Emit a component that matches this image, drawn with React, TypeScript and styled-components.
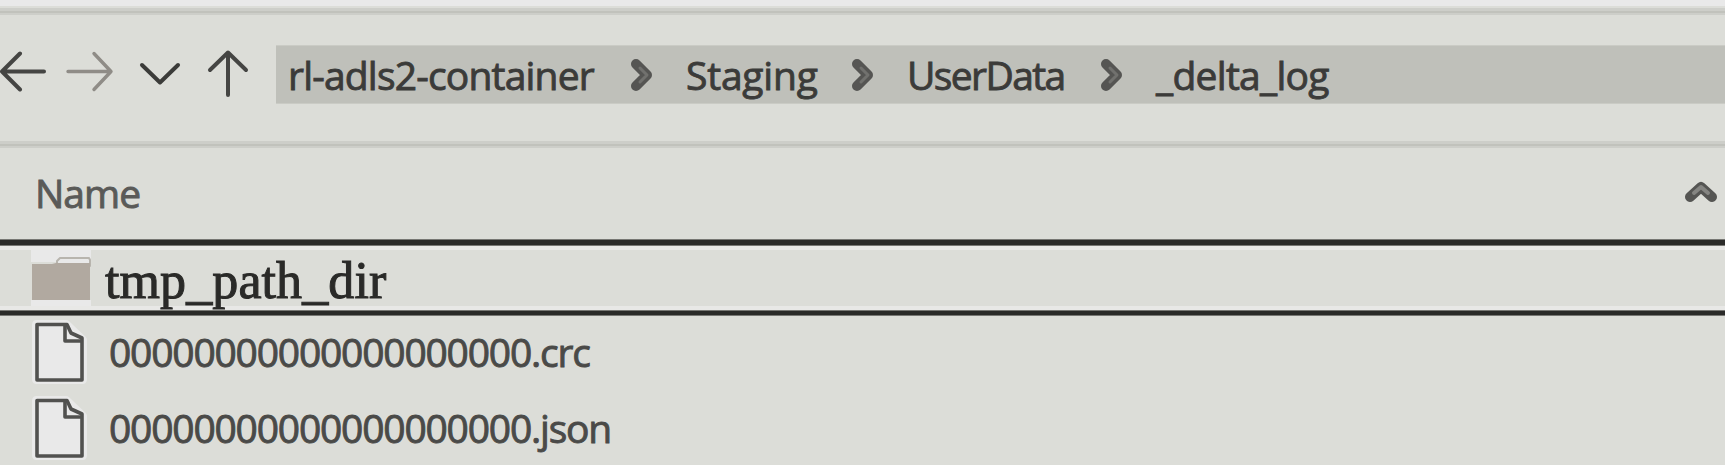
import React from "react";
import styled, { createGlobalStyle } from "styled-components";

const Global = createGlobalStyle`
  * { box-sizing: border-box; }
  body { margin: 0; background: #dcddd8; overflow: hidden; }
`;

const Explorer = styled.main`
  display: flex;
  flex-direction: column;
  width: 1725px;
  height: 465px;
  overflow: hidden;
  background: #dcddd8;
  color: #3b3b39;
  font-family: "Open Sans", "Noto Sans", sans-serif;
  font-size: 39px;
  font-weight: 500;
  line-height: 54px;
  white-space: pre;
  -webkit-text-stroke: 0.9px currentColor;
`;

const TopStrip = styled.div`
  flex: none;
  height: 8px;
  border-bottom: 2px solid #dcddd8;
  background: #e9e9e9;
`;

const Divider = styled.div`
  flex: none;
  height: 7px;
  background: linear-gradient(#cdcec9 0 3px, #c1c2bc 3px 5px, #cdcec9 5px);
`;

const Toolbar = styled.nav`
  flex: none;
  display: flex;
  height: 126px;
  padding-top: 30px;
`;

const NavButtons = styled.div`
  flex: none;
  display: flex;
  width: 276px;
  height: 59px;
`;

const Drawing = styled.svg`
  flex: none;
  display: block;
  fill: none;
  stroke-linecap: round;
  stroke-linejoin: round;
`;

const AddressBar = styled.div`
  flex: 1;
  display: flex;
  align-items: center;
  height: 59px;
  padding-left: 12px;
  background: #bfc0ba;
  border-top: 1px solid #cacbc5;
  border-bottom: 1px solid #cacbc5;
`;

const Crumb = styled.span<{ $width: number; $spacing: number }>`
  flex: none;
  width: ${(p) => p.$width}px;
  letter-spacing: ${(p) => p.$spacing}px;
`;

const Separator = styled(Drawing)<{ $gap: number }>`
  width: 26px;
  height: 36px;
  margin-right: ${(p) => p.$gap}px;
`;

const HeaderRow = styled.div`
  flex: none;
  display: flex;
  align-items: center;
  justify-content: space-between;
  height: 91px;
  padding: 0 6px 3px 35px;
`;

const ColumnName = styled.span`
  margin-top: 2px;
  font-weight: 400;
  color: #5a5a58;
  letter-spacing: -1px;
`;

const Rule = styled.div<{ $height: number }>`
  flex: none;
  height: ${(p) => p.$height}px;
  background: #2a2a28;
  border-top: 1px solid #777773;
  border-bottom: 1px solid #777773;
`;

const FolderRow = styled.div`
  flex: none;
  display: flex;
  height: 64px;
  padding-left: 31px;
  border-top: 4px solid #e8e8e6;
  border-bottom: 4px solid #e8e8e6;
`;

const FolderName = styled.span`
  margin-left: 14px;
  font-family: "Liberation Serif", serif;
  font-size: 52px;
  font-weight: 400;
  line-height: 62px;
  letter-spacing: 0.1px;
  color: #2a2a28;
  -webkit-text-stroke: 1px #2a2a28;
`;

const FileRow = styled.div`
  flex: none;
  display: flex;
  align-items: center;
  height: 76px;
  padding: 0 0 4px 31px;
`;

const FileName = styled.span`
  margin-left: 18px;
  letter-spacing: -1.2px;
  color: #4a4a48;
`;

const crumbs = [
  { label: "rl-adls2-container", width: 340, spacing: -0.8, gap: 32 },
  { label: "Staging", width: 163, spacing: -0.2, gap: 32 },
  { label: "UserData", width: 191, spacing: -1.6, gap: 32 },
  { label: "_delta_log", width: 200, spacing: -0.7, gap: 0 },
];
const files = ["00000000000000000000.crc", "00000000000000000000.json"];

const FileIcon = () => (
  <Drawing width="60" height="68" viewBox="0 0 60 68">
    <path d="M5.5 6.5H35L51.5 22V61.5H5.5Z" fill="#e9e9e9" stroke="#e9e9e9" strokeWidth="9" />
    <path d="M6 6.5H36L40 15L51 20V62H6Z" fill="#e9e9e9" stroke="#51514f" strokeWidth="3.6" />
    <path d="M34 7V23H50" stroke="#51514f" strokeWidth="3.6" />
  </Drawing>
);

export default function App() {
  return (
    <>
      <Global />
      <Explorer>
        <TopStrip />
        <Divider />
        <Toolbar>
          <NavButtons>
            <Drawing width="276" height="59" viewBox="0 45 276 59" strokeWidth="4">
              <path d="M44 71.5H2M20 53.5L2 71.5L20 89.5" stroke="#454543" />
              <path d="M68 71.5H111M94 53.5L111 71.5L94 89.5" stroke="#8f8c87" strokeWidth="3.4" />
              <path d="M142 65L160 82.5L178 65" stroke="#3b3b39" />
              <path d="M228 95V52.5M210 70L228 52.5L246 70" stroke="#454543" />
            </Drawing>
          </NavButtons>
          <AddressBar>
            {crumbs.map((crumb) => (
              <React.Fragment key={crumb.label}>
                <Crumb $width={crumb.width} $spacing={crumb.spacing}>{crumb.label}</Crumb>
                {crumb.gap > 0 && (
                  <Separator viewBox="0 0 26 36" $gap={crumb.gap}>
                    <path d="M8 7L19 18L8 29" stroke="#555553" strokeWidth="10" />
                    <path d="M12 11L19 18L12 25" stroke="#71716e" strokeWidth="3" />
                  </Separator>
                )}
              </React.Fragment>
            ))}
          </AddressBar>
        </Toolbar>
        <Divider />
        <HeaderRow>
          <ColumnName>Name</ColumnName>
          <Drawing width="36" height="26" viewBox="0 0 36 26">
            <path d="M7 18L18 8L29 18" stroke="#555553" strokeWidth="10" />
            <path d="M11 14L18 8L25 14" stroke="#858582" strokeWidth="4" />
          </Drawing>
        </HeaderRow>
        <Rule $height={7} />
        <FolderRow>
          <Drawing width="60" height="56" viewBox="0 0 60 56">
            <path d="M0 0H60V12H0ZM0 50H60V56H0Z" fill="#e9e9e9" />
            <path d="M26 14V11L29 8H58L59 10V16H25Z" fill="#e9e9e9" stroke="#b8b5ae" strokeWidth="2" />
            <path d="M1 14H21L25 13H59V50H1Z" fill="#b1a9a0" />
          </Drawing>
          <FolderName>tmp_path_dir</FolderName>
        </FolderRow>
        <Rule $height={6} />
        {files.map((file) => (
          <FileRow key={file}>
            <FileIcon />
            <FileName>{file}</FileName>
          </FileRow>
        ))}
      </Explorer>
    </>
  );
}
